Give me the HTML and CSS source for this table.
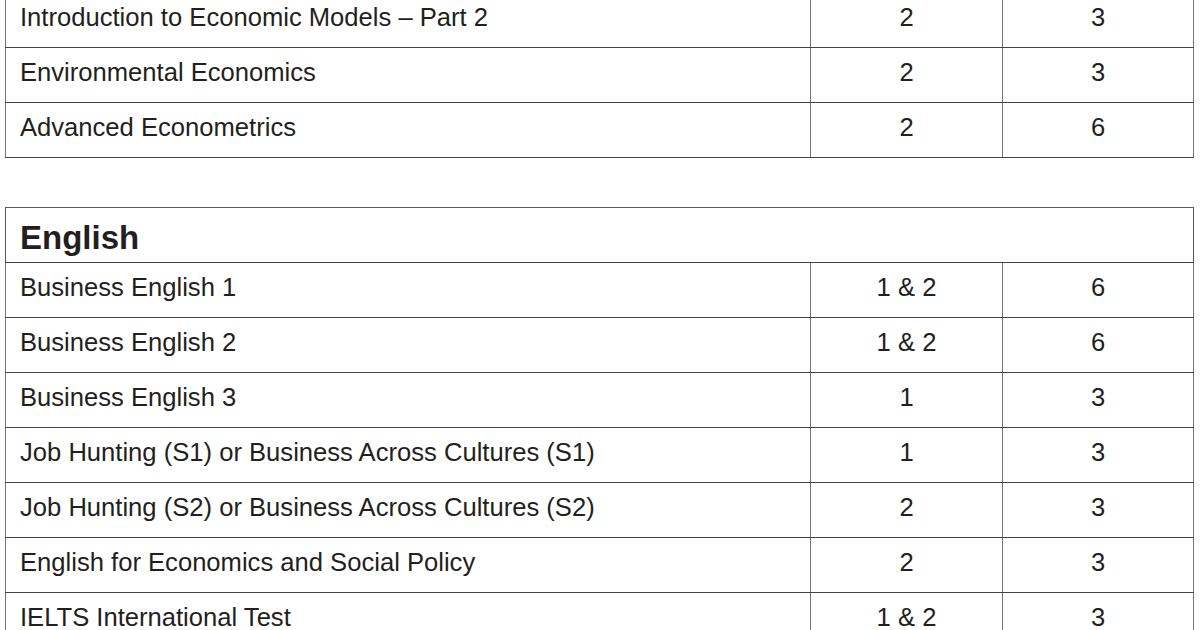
FILE: index.html
```html
<!DOCTYPE html>
<html lang="en">
<head>
<meta charset="utf-8">
<title>Courses</title>
<link rel="stylesheet" href="styles.css">
</head>
<body>
<div class="page">
  <table class="course-table first">
    <colgroup><col class="c-name"><col class="c-sem"><col class="c-ects"></colgroup>
    <tbody>
      <tr><td>Introduction to Economic Models – Part 2</td><td class="num">2</td><td class="num">3</td></tr>
      <tr><td>Environmental Economics</td><td class="num">2</td><td class="num">3</td></tr>
      <tr><td>Advanced Econometrics</td><td class="num">2</td><td class="num">6</td></tr>
    </tbody>
  </table>

  <table class="course-table second">
    <colgroup><col class="c-name"><col class="c-sem"><col class="c-ects"></colgroup>
    <thead>
      <tr><th colspan="3" class="section">English</th></tr>
    </thead>
    <tbody>
      <tr><td>Business English 1</td><td class="num">1 &amp; 2</td><td class="num">6</td></tr>
      <tr><td>Business English 2</td><td class="num">1 &amp; 2</td><td class="num">6</td></tr>
      <tr><td>Business English 3</td><td class="num">1</td><td class="num">3</td></tr>
      <tr><td>Job Hunting (S1) or Business Across Cultures (S1)</td><td class="num">1</td><td class="num">3</td></tr>
      <tr><td>Job Hunting (S2) or Business Across Cultures (S2)</td><td class="num">2</td><td class="num">3</td></tr>
      <tr><td>English for Economics and Social Policy</td><td class="num">2</td><td class="num">3</td></tr>
      <tr><td>IELTS International Test</td><td class="num">1 &amp; 2</td><td class="num">3</td></tr>
    </tbody>
  </table>
</div>
</body>
</html>
```

FILE: styles.css
```css
html, body {
  margin: 0;
  padding: 0;
  background: #ffffff;
}

body {
  font-family: "Liberation Sans", Arial, Helvetica, sans-serif;
  color: #231f20;
  overflow: hidden;
}

.page {
  padding-left: 5px;
}

.course-table {
  width: 1188px;
  border-collapse: collapse;
  table-layout: fixed;
  border: 1px solid #5a5a5a;
}

.course-table.first {
  margin-top: -8px;
}

.course-table.second {
  margin-top: 49px;
}

.c-name { width: 805px; }
.c-sem { width: 192px; }
.c-ects { width: 191px; }

.course-table td {
  border-top: 1px solid #444444;
  border-bottom: 1px solid #444444;
  border-left: 1px solid #777777;
  border-right: 1px solid #777777;
  font-size: 25.6px;
  line-height: 28px;
  padding: 10px 0 16px 14px;
  white-space: nowrap;
  text-align: left;
}

.course-table td.num {
  text-align: center;
  padding-left: 0;
}

.course-table th.section {
  border-bottom: 1px solid #444444;
  font-size: 33px;
  font-weight: bold;
  line-height: 28px;
  padding: 16px 0 10px 14px;
  text-align: left;
}
```
